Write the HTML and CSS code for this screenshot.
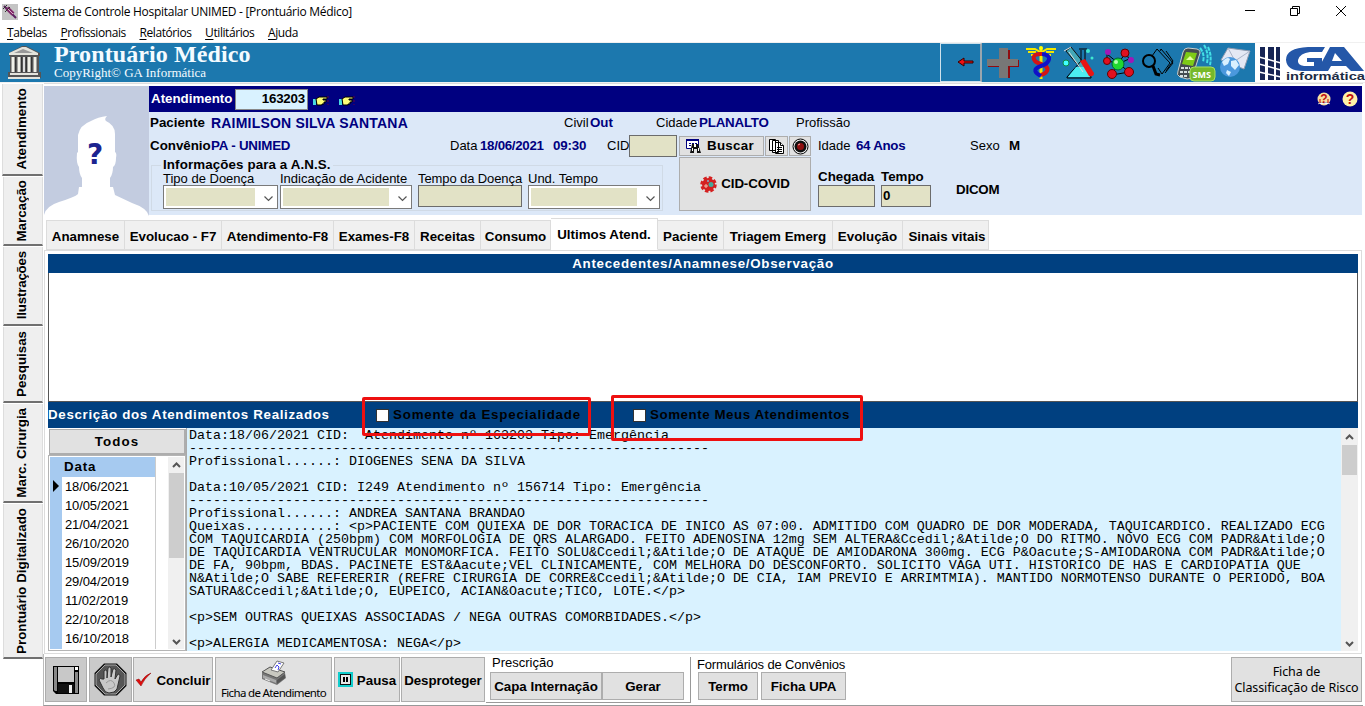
FILE: index.html
```html
<!DOCTYPE html>
<html lang="pt-BR">
<head>
<meta charset="utf-8">
<title>Prontuário Médico</title>
<link rel="stylesheet" href="styles.css">
</head>
<body>
<div class="window">
  <header class="titlebar">
    <svg class="app-icon" width="16" height="16" viewBox="0 0 16 16"><rect width="16" height="16" fill="#c4c4c4"/><path d="M2 2l12 12" stroke="#5c2060" stroke-width="2"/><path d="M5 4l6 6" stroke="#802868" stroke-width="4"/><path d="M1 5l4-4M3 8l5-5" stroke="#333"/><path d="M6 5l5 5" stroke="#d8a8c8"/></svg>
    <span class="window-title">Sistema de Controle Hospitalar UNIMED - [Prontuário Médico]</span>
    <svg class="window-controls" width="120" height="22" viewBox="0 0 120 22" fill="none" stroke="#000"><path d="M5 9.500h10M50.500 7.500h7v7h-7zM52.500 7V5.500h7v7H58M96 5l10 10M106 5l-10 10"/></svg>
  </header>
  <nav class="menubar"><span><u>T</u>abelas</span><span><u>P</u>rofissionais</span><span><u>R</u>elatórios</span><span><u>U</u>tilitários</span><span><u>A</u>juda</span></nav>

  <section class="banner">
    <svg class="bank" width="34" height="36" viewBox="0 0 34 36"><path d="M2 11v-3L15 1h4l14 7v3H32v16h2v6H1v-6h2V11z" fill="#555"/><path d="M2 8L15 2h4l12 6v2H2zM3 28h28v2H3zM1 32h32v2H1z" fill="#e4e4dc"/><path d="M7 8l9-4 10 4z" fill="#999"/><path d="M6 12v15M12 12v15M22 12v15M28 12v15" stroke="#f0f0e8" stroke-width="3"/><path d="M17 12v15" stroke="#ddd" stroke-width="2"/><path d="M8.500 12v15M14.500 12v15M19.500 12v15M24.500 12v15" stroke="#333"/></svg>
    <div class="brand"><h1>Prontuário Médico</h1><p>CopyRight© GA Informática</p></div>
    <div class="back"><svg width="17" height="10" viewBox="0 0 17 10"><path d="M1 5l6-4v3h9v2H7v3z" fill="#f01010" stroke="#300"/></svg></div>
    <svg class="tools" width="273" height="39" viewBox="0 0 273 39">
      <path d="M19 7h9v10h9v7h-9v11H19V24H6v-6h13z" fill="#900c10"/><path d="M17 5h9v11h10v7H26v12H17V23H5v-7h12z" fill="#777"/>
      <g fill="none"><path d="M44 6h9l5 3M46 9h8M49 12h8M74 6h-9l-5 3M72 9h-8M69 12h-8" stroke="#f4e800" stroke-width="2"/><path d="M59 5v31" stroke="#f4e800" stroke-width="3"/><path d="M60 11c-11-1-11 7-1 10s7 9 0 11" stroke="#d41414" stroke-width="4"/><path d="M60 11c11 1 8 9-1 12s-6 7 0 10" stroke="#1010c8" stroke-width="4"/><circle cx="59" cy="5" r="2" fill="#ff0"/></g>
      <path d="M84 8l5-4 20 25q1 4-4 4z" fill="#44a8b8" stroke="#101010"/><path d="M97 6h8M99 7v11L85 34v1h24v-1L103 18V7" fill="none" stroke="#000"/><path d="M94 24h10l4 10H86z" fill="#4cecf0"/><path d="M98 18l5-2 9 14q0 4-5 3z" fill="#e81414"/><path d="M82 8l7-4M87 9l14 20" stroke="#ddd"/><circle cx="84" cy="20" r="3" fill="#40ffff" stroke="#184"/><circle cx="106" cy="8" r="2" fill="#40ead0"/><circle cx="110" cy="15" r="1.500" fill="#40ead0"/>
      <path d="M125 11v7l11 2 8-10 3 6-11 5-6 11 17-3z" stroke="#000" fill="none"/><circle cx="136" cy="21" r="6" fill="#20d830" stroke="#063"/><g fill="#e01020" stroke="#600"><circle cx="125" cy="18" r="3.500"/><circle cx="143" cy="10" r="4"/><circle cx="130" cy="31" r="4.500"/><circle cx="147" cy="29" r="4.500"/></g><g fill="#a018b8"><circle cx="126" cy="9" r="3"/><circle cx="149" cy="17" r="3"/></g><circle cx="134" cy="19" r="2" fill="#b0ffb0"/>
      <g fill="none" stroke="#000"><path d="M170 13l5-7 13 14-8 11M178 8l1-2 12 14-8 10M184 8l7 10-7 10M176 25l4 6"/><circle cx="167" cy="18" r="6" stroke-width="2"/><path d="M171 23l3 8 4 1" stroke-width="3"/></g>
      <path d="M201 9q1-4 5-4l9 1q4 1 3 4l-7 22q-2 5-6 4l-7-2q-4-2-2-6z" fill="#454c50" stroke="#c8d0d0"/><path d="M204 9l11 1-4 13-11-2z" fill="#7ecb16"/><path d="M204 17l4-4 4 4z" fill="#e4ffa0"/><path d="M199 25h9M198 29h10M198 33h8" stroke="#d8e0e0" stroke-width="2" stroke-dasharray="3 1"/><rect x="208" y="24" width="25" height="14" rx="4" fill="#77b82a" stroke="#a9e05e"/><text x="210.500" y="34.500" class="sms">SMS</text><path d="M218 5q5 6 3 14M222 2q5 8 3 18M226 4q4 8 2 18" fill="none" stroke="#42e0e6" stroke-width="2" stroke-dasharray="4 1"/>
      <path d="M246 5l22 3-6 18-23-9z" fill="#e4e8f4" stroke="#8f9bb0"/><path d="M246 5l7 13 15-10" fill="none" stroke="#aab4c8"/><circle cx="248" cy="24" r="10" fill="#4b98dd"/><path d="M240 19q5-6 8-3l-2 5-4 2zM249 18l5-1 3 5-4 5-4-4zM245 27l4 2-2 4-3-3z" fill="#d9f0ff"/>
    </svg>
    <svg class="logo" width="110" height="39" viewBox="0 0 110 39"><g fill="#162454"><path d="M5 4h5v33H5zM13 4h6v33h-6zM21 4h4v33h-4z"/></g><path d="M4 14l22 6M4 21l22 6M4 29l22 5" stroke="#fff" stroke-width="1.500"/><path d="M70 4H53Q31 5 31 17q1 11 17 11h19V15H52v4h7v4H49q-7-1-6-6 2-7 12-8h12z" fill="#2457a8"/><path fill-rule="evenodd" d="M75 4h14l20 24H96l-5-5H76l-3 5H62zM77 18h10l-7-8z" fill="#2457a8"/><text x="31" y="37" class="logo-text" textLength="79" lengthAdjust="spacingAndGlyphs">informática</text></svg>
  </section>

  <div class="workspace">
    <aside class="side-tabs">
      <div class="side-tab t1"><span>Atendimento</span></div><div class="side-tab t2"><span>Marcação</span></div><div class="side-tab t3"><span>Ilustrações</span></div><div class="side-tab t4"><span>Pesquisas</span></div><div class="side-tab t5"><span>Marc. Cirurgia</span></div><div class="side-tab t6"><span>Prontuário Digitalizado</span></div>
    </aside>
    <main class="main">
      <section class="patient">
        <svg class="avatar" width="105" height="132" viewBox="0 0 105 132"><rect width="105" height="132" fill="#c3cce0"/><path d="M0 132v-3q2-9 15-13 16-5 19-8l1-7h3V92q-3-4-3-11-3-4-2-14l1-1V49q2-10 13-14 7-4 16-5-3 3-1 5 9 4 9 13v18q2 1 1 6 0 7-3 9 0 7-3 11v9h3l2 8 17 8q15 5 17 13v2z" fill="#fff"/><text x="51" y="78" text-anchor="middle" class="question">?</text></svg>
        <div class="patient-info">
          <div class="attendance"><b class="att-label">Atendimento</b><span class="att-number">163203</span>
            <svg class="hand" width="18" height="12" viewBox="0 0 18 12"><path d="M0 4h3v6H0z" fill="#48d8e0"/><path d="M3 4l3-2h8v2h-4v1h3v2h-2v2H9v1H4z" fill="#ffff78" stroke="#000"/><path d="M15 1v9" stroke="#600040" stroke-dasharray="2 2"/></svg>
            <svg class="hand" width="18" height="12" viewBox="0 0 18 12"><path d="M0 4h3v6H0z" fill="#48d8e0"/><path d="M3 4l3-2h8v2h-4v1h3v2h-2v2H9v1H4z" fill="#ffff78" stroke="#000"/><path d="M15 1v9" stroke="#600040" stroke-dasharray="2 2"/></svg>
            <svg class="helps" width="42" height="18" viewBox="0 0 42 18"><circle cx="8" cy="9" r="6.500" fill="#f8e0a0"/><path d="M2 14q3-3 6-1 3-2 6 1" fill="#fff" stroke="#aaa"/><text x="8" y="13" text-anchor="middle" class="help-mark">?</text><path d="M4 9v4M12 9v4" stroke="#c00"/><circle cx="34" cy="9" r="7.500" fill="#fff0a8"/><text x="34" y="14" text-anchor="middle" class="help-mark big">?</text></svg>
          </div>
          <div class="line line-a"><b class="w-pac">Paciente</b><b class="value name">RAIMILSON SILVA SANTANA</b><span class="w-civil">Civil</span><b class="value w-out">Out</b><span class="w-cidade">Cidade</span><b class="value w-plan">PLANALTO</b><span>Profissão</span></div>
          <div class="patient-grid">
            <div class="pg-left">
              <div class="line line-b"><b class="w-conv">Convênio</b><b class="value w-unimed">PA - UNIMED</b><span class="w-data">Data</span><b class="value w-date">18/06/2021</b><b class="value w-hour">09:30</b><span class="w-cid">CID</span><i class="field cid-field"></i></div>
              <div class="ans"><b class="ans-title">Informações para a A.N.S.</b>
                <div class="ans-fields">
                  <label><span>Tipo de Doença</span><i class="select s115"><svg width="11" height="7" viewBox="0 0 11 7"><path d="M1.500 1.500l4 4 4-4"/></svg></i></label>
                  <label><span>Indicação de Acidente</span><i class="select s132"><svg width="11" height="7" viewBox="0 0 11 7"><path d="M1.500 1.500l4 4 4-4"/></svg></i></label>
                  <label><span class="ls-tempo">Tempo da Doença</span><i class="field s104"></i></label>
                  <label><span>Und. Tempo</span><i class="select s132"><svg width="11" height="7" viewBox="0 0 11 7"><path d="M1.500 1.500l4 4 4-4"/></svg></i></label>
                </div>
              </div>
            </div>
            <div class="pg-mid">
              <div class="mid-row">
                <div class="btn buscar"><svg width="16" height="16" viewBox="0 0 16 16"><path d="M.500 1.500h12v9H.500z" fill="#fff" stroke="#000080"/><path d="M0 2h13" stroke="#000080" stroke-width="2"/><path d="M3 5.500h8M3 7.500h3" stroke="#000080" stroke-dasharray="2 1"/><path d="M6 6h2v3h2V6h2l3 9h-4v-4H8v4H4z" fill="#111"/><path d="M6.500 10v3M12.500 10v3" stroke="#fff"/></svg><b>Buscar</b></div>
                <div class="btn docs"><svg width="17" height="17" viewBox="0 0 17 17" fill="#fff" stroke="#000"><path d="M1.500 1.500h6v11h-6zM4.500 2.500h6v12h-6zM7.500 4.500h5l3 3v8h-8z"/><path d="M12.500 4.500v3h3M9 9.500h5M9 11.500h5M9 13.500h5"/></svg></div>
                <div class="btn rec"><svg width="17" height="17" viewBox="0 0 17 17"><circle cx="8.500" cy="8.500" r="7.500" fill="#f4f4f4" stroke="#000"/><circle cx="8.500" cy="8.500" r="6" fill="#111"/><circle cx="8.500" cy="8.500" r="3.500" fill="#8e1010"/><path d="M6 7l2-1" stroke="#faa"/></svg></div>
              </div>
              <div class="btn covid"><svg width="17" height="17" viewBox="0 0 17 17"><circle cx="8.500" cy="8.500" r="6.500" fill="#d42020"/><circle cx="8.500" cy="8.500" r="7" fill="none" stroke="#d42020" stroke-width="2.500" stroke-dasharray="3.500 2"/><circle cx="11" cy="8.500" r="2.500" fill="#45a89a"/><path d="M4 10h4M6 8v4" stroke="#f0c0b0"/><circle cx="8" cy="5" r="1" fill="#8ac"/></svg><b>CID-COVID</b></div>
            </div>
            <div class="pg-right">
              <div class="line line-c"><span class="w-idade">Idade</span><b class="value w-anos">64 Anos</b><span class="w-sexo">Sexo</span><b>M</b></div>
              <div class="times"><label><b>Chegada</b><i class="field f57"></i></label><label><b>Tempo</b><i class="field f50"><b>0</b></i></label><b class="dicom">DICOM</b></div>
            </div>
          </div>
        </div>
      </section>

      <nav class="tabs"><b class="k1">Anamnese</b><b class="k2">Evolucao - F7</b><b class="k3">Atendimento-F8</b><b class="k4">Exames-F8</b><b class="k5">Receitas</b><b class="k6">Consumo</b><b class="k7 active">Ultimos Atend.</b><b class="k8">Paciente</b><b class="k9">Triagem Emerg</b><b class="k10">Evolução</b><b class="k11">Sinais vitais</b></nav>

      <section class="sheet">
        <h2 class="bar bar-top">Antecedentes/Anamnese/Observação</h2>
        <div class="notes"></div>
        <div class="bar bar-mid"><span class="bar-title">Descrição dos Atendimentos Realizados</span>
          <span class="check c1"><i></i>Somente da Especialidade</span><span class="check c2"><i></i>Somente Meus Atendimentos</span>
          <div class="mark m1"></div><div class="mark m2"></div>
        </div>
        <div class="records">
          <div class="dates">
            <div class="btn todos">Todos</div>
            <div class="grid">
              <div class="gutter"><svg width="6" height="12" viewBox="0 0 6 12"><path d="M0 0l6 6-6 6z"/></svg></div>
              <div class="col"><b>Data</b><span>18/06/2021</span><span>10/05/2021</span><span>21/04/2021</span><span>26/10/2020</span><span>15/09/2019</span><span>29/04/2019</span><span>11/02/2019</span><span>22/10/2018</span><span>16/10/2018</span></div>
              <div class="scroll grid-scroll"><svg width="9" height="6" viewBox="0 0 9 6"><path d="M1 5l3.500-3.500L8 5"/></svg><i></i><svg class="down" width="9" height="6" viewBox="0 0 9 6"><path d="M1 1l3.500 3.500L8 1"/></svg></div>
            </div>
          </div>
<pre class="log">Data:18/06/2021 CID:  Atendimento nº 163203 Tipo: Emergência
-----------------------------------------------------------------
Profissional......: DIOGENES SENA DA SILVA

Data:10/05/2021 CID: I249 Atendimento nº 156714 Tipo: Emergência
-----------------------------------------------------------------
Profissional......: ANDREA SANTANA BRANDAO
Queixas...........: &lt;p&gt;PACIENTE COM QUIEXA DE DOR TORACICA DE INICO AS 07:00. ADMITIDO COM QUADRO DE DOR MODERADA, TAQUICARDICO. REALIZADO ECG
COM TAQUICARDIA (250bpm) COM MORFOLOGIA DE QRS ALARGADO. FEITO ADENOSINA 12mg SEM ALTERA&amp;Ccedil;&amp;Atilde;O DO RITMO. NOVO ECG COM PADR&amp;Atilde;O
DE TAQUICARDIA VENTRUCULAR MONOMORFICA. FEITO SOLU&amp;Ccedil;&amp;Atilde;O DE ATAQUE DE AMIODARONA 300mg. ECG P&amp;Oacute;S-AMIODARONA COM PADR&amp;Atilde;O
DE FA, 90bpm, BDAS. PACINETE EST&amp;Aacute;VEL CLINICAMENTE, COM MELHORA DO DESCONFORTO. SOLICITO VAGA UTI. HISTORICO DE HAS E CARDIOPATIA QUE
N&amp;Atilde;O SABE REFERERIR (REFRE CIRURGIA DE CORRE&amp;Ccedil;&amp;Atilde;O DE CIA, IAM PREVIO E ARRIMTMIA). MANTIDO NORMOTENSO DURANTE O PERIODO, BOA
SATURA&amp;Ccedil;&amp;Atilde;O, EUPEICO, ACIAN&amp;Oacute;TICO, LOTE.&lt;/p&gt;

&lt;p&gt;SEM OUTRAS QUEIXAS ASSOCIADAS / NEGA OUTRAS COMORBIDADES.&lt;/p&gt;

&lt;p&gt;ALERGIA MEDICAMENTOSA: NEGA&lt;/p&gt;</pre>
          <div class="scroll log-scroll"><svg width="9" height="6" viewBox="0 0 9 6"><path d="M1 5l3.500-3.500L8 5"/></svg><i></i><svg class="down" width="9" height="6" viewBox="0 0 9 6"><path d="M1 1l3.500 3.500L8 1"/></svg></div>
        </div>
      </section>

      <footer class="footer">
        <div class="btn dark save"><svg width="26" height="28" viewBox="0 0 26 28"><path d="M0 0h26v28H3l-3-3z" fill="#000"/><path d="M1 1h3v24H2l-1-1zM22 6h3v21h-3z" fill="#888"/><path d="M5 1h16v15H5z" fill="#c8c8c8"/><path d="M22 1h3v3h-3z" fill="#fff"/><path d="M5 18h16v9H5z" fill="#111"/><path d="M16 19h3v8h-3z" fill="#eee"/></svg></div>
        <div class="btn dark stop"><svg width="33" height="33" viewBox="0 0 33 33"><path d="M10 .500h13l9.500 9.500v13L23 32.500H10L.500 23V10z" fill="#151515"/><path d="M11 2h11l9 9v11l-9 9H11l-9-9V11z" fill="#555" stroke="#aaa"/><path d="M10 16V8q1-2 3 0v7l1-10q2-2 3 0v9l2-8q2-1 3 1l-1 9 3-5q2 0 2 2l-3 13q-2 4-8 4-4 0-6-5l-4-8q1-3 3-1z" fill="#c8c8c8" stroke="#333"/><path d="M12 20q5-5 8 0t-6 6" fill="none" stroke="#999"/></svg></div>
        <div class="btn concluir"><svg width="17" height="15" viewBox="0 0 17 15"><path d="M1 8l3-1 2 3q4-7 10-9Q9 7 6 14z" fill="#e00c0c" stroke="#800" stroke-width=".5"/></svg><b>Concluir</b></div>
        <div class="btn ficha"><svg width="28" height="26" viewBox="0 0 28 26"><path d="M2 13l7-5 16 5 1 5-9 7L2 19z" fill="#777"/><path d="M2 12l8-5 15 5-8 6z" fill="#c8c8c0" stroke="#555"/><path d="M3 15l13 5v3L3 18z" fill="#aaa"/><path d="M17 20l8-6v4l-8 6z" fill="#555"/><path d="M11 10l6-9 7 2-6 9z" fill="#fff" stroke="#777"/><path d="M15 8l2-3 2 2-1 3M18 3l3 1" stroke="#4040e8" fill="none"/><path d="M5 19l5 2" stroke="#eee"/></svg><span>Ficha de Atendimento</span></div>
        <div class="btn pausa"><svg width="15" height="15" viewBox="0 0 15 15"><rect x="1" y="1" width="13" height="13" fill="#e8e8e8" stroke="#1cc" stroke-width="2"/><rect x="2.500" y="2.500" width="10" height="10" fill="none" stroke="#111"/><path d="M6 5v5M9 5v5" stroke="#000" stroke-width="2"/></svg><b>Pausa</b></div>
        <div class="btn desp"><b>Desproteger</b></div>
        <div class="presc"><span>Prescrição</span><div><div class="btn capa"><b>Capa Internação</b></div><div class="btn gerar"><b>Gerar</b></div></div></div>
        <div class="forms"><span>Formulários de Convênios</span><div><div class="btn termo"><b>Termo</b></div><div class="btn upa"><b>Ficha UPA</b></div></div></div>
        <div class="btn risco"><span>Ficha de</span><span>Classificação de Risco</span></div>
      </footer>
    </main>
  </div>
</div>
</body>
</html>
```
FILE: styles.css
```css
* { box-sizing: border-box; }
body { margin: 0; background: #fff; color: #000; font: 13px/16px "Liberation Sans", Arial, sans-serif; }
i { font-style: normal; display: block; }
svg { display: block; flex: none; }
h1, h2, p, pre { margin: 0; }
b { font-size: 13.33px; font-weight: bold; }
.window { width: 1365px; height: 706px; overflow: hidden; display: flex; flex-direction: column; white-space: nowrap; }

.titlebar { height: 24px; display: flex; align-items: center; padding-left: 2px; font: 12px/16px "Open Sans", sans-serif; }
.window-title { margin-left: 5px; letter-spacing: -0.29px; }
.window-controls { margin-left: auto; margin-right: 5px; }
.menubar { height: 18px; padding: 0 7px; display: flex; gap: 13.6px; font: 12px/17px "Open Sans", sans-serif; letter-spacing: -0.42px; }
.menubar u { text-underline-offset: 2px; }

.banner { height: 41px; border-top: 1px solid #f0f0f0; border-bottom: 1px solid #f0f0f0; display: flex; background: #fff; }
.bank { box-sizing: content-box; padding: 2px 12px 1px 7px; background: #1c78ae; height: 36px; width: 34px; }
.brand { width: 887px; padding-left: 1px; background: #1c78ae; color: #f4fbff; font-family: "Liberation Serif", "Times New Roman", serif; }
.brand h1 { font-size: 24px; line-height: 22px; letter-spacing: 0.1px; }
.brand p { font-size: 13px; line-height: 16px; }
.back { width: 42px; padding: 13px 0 0 16px; background: #1c78ae; border: 1px solid #cfe2ec; border-right: 2px solid #9aa6ae; }
.tools { background: #1c78ae; }
.sms { font: bold 9px "Open Sans", sans-serif; fill: #fff; }
.logo-text { font: bold 11px "Liberation Sans", sans-serif; fill: #1c2c44; }

.workspace { flex: 1; display: flex; min-height: 0; }
.side-tabs { width: 44px; padding: 1px 0 0 2px; }
.side-tab { width: 40px; margin-left: 1px; margin-bottom: 1px; background: #efefef; border-left: 1px solid #ddd; border-bottom: 2px solid #707070; border-right: 1px solid #ddd; display: flex; align-items: center; justify-content: center; }
.side-tab span { writing-mode: vertical-rl; transform: rotate(180deg); font-size: 13.33px; font-weight: bold; line-height: 16px; margin-right: 2px; }
.t1 { height: 92px; width: 41px; margin-left: 0; }
.t2 { height: 69px; }
.t3 { height: 79px; }
.t3 span { letter-spacing: -0.2px; }
.t4 { height: 76px; }
.t5 { height: 99px; }
.t6 { height: 155px; }

.main { width: 1319px; display: flex; flex-direction: column; border-top: 1px solid #ddd; padding-top: 2px; }
.patient { display: flex; height: 132px; }
.question { font: bold 28px "DejaVu Sans", sans-serif; fill: #1c2490; }
.patient-info { width: 1213px; height: 129px; background: #dce8f8; }
.attendance { height: 26px; background: #000080; display: flex; align-items: center; color: #fff; }
.att-label { width: 86px; padding-left: 2px; }
.att-number { width: 73px; height: 21px; background: #d9f2ff; border: 1px solid #888; color: #000; font: bold 13.33px/18px "Liberation Sans", sans-serif; letter-spacing: -0.2px; text-align: right; padding-right: 2px; }
.hand { margin: 4px 0 0 5px; }
.hand + .hand { margin-left: 8px; }
.helps { margin-left: auto; margin-right: 4px; }
.help-mark { font: bold 12px "Liberation Sans", sans-serif; fill: #c01010; }
.help-mark.big { font-size: 14px; }
.line { display: flex; align-items: center; height: 22px; }
.value { color: #000080; }
.line-a { padding-left: 1px; }
.w-pac { width: 61px; }
.name { width: 353px; font-size: 14px; letter-spacing: 0.2px; }
.w-civil { width: 26px; }
.w-out { width: 66px; }
.w-cidade { width: 43px; }
.w-plan { width: 97px; letter-spacing: -0.2px; }
.patient-grid { display: grid; grid-template-columns: 530px 139px 1fr; height: 81px; }
.line-b, .line-c { height: 23px; }
.line-b { padding-left: 1px; }
.w-conv { width: 61px; }
.w-unimed { width: 239px; letter-spacing: -0.2px; }
.w-data { width: 30px; }
.w-date { width: 73px; letter-spacing: -0.3px; }
.w-hour { width: 54px; letter-spacing: -0.2px; }
.w-cid { width: 22px; }
.field { background: #e2e2c6; border: 1px solid #6c6c6c; height: 22px; }
.cid-field { width: 48px; margin-top: 1px; }
.ans { position: relative; margin: 8px 0 0 2px; width: 512px; height: 46px; border: 1px solid #d0dae6; }
.ans-title { position: absolute; left: 9px; top: -8px; background: #dce8f8; padding: 0 2px; line-height: 14px; letter-spacing: 0.12px; }
.ans-fields { display: flex; padding: 5px 0 0 11px; position: relative; }
.ans-fields label { display: block; line-height: 15px; }
.ans-fields label:nth-child(2) { margin-left: 2px; }
.ans-fields label:nth-child(3), .ans-fields label:nth-child(4) { margin-left: 6px; }
.ans-fields label > span { display: block; width: 0; height: 14px; }
.ls-tempo { letter-spacing: -0.1px; }
.select { height: 24px; background: #fff; border: 1px solid #7a7a7a; padding: 2px; display: flex; align-items: center; justify-content: flex-end; }
.select::before { content: ""; flex: 1; align-self: stretch; background: #e2e2c6; }
.select svg { margin: 2px 1px 0 8px; fill: none; stroke: #555; stroke-width: 1.2; }
.s115 { width: 115px; } .s132 { width: 132px; } .s104 { width: 104px; }
.btn { background: #e1e1e1; border: 1px solid #adadad; display: flex; align-items: center; justify-content: center; }
.pg-mid { padding-top: 2px; width: 132px; }
.mid-row { display: flex; gap: 1px; height: 20px; margin-bottom: 1px; }
.buscar { width: 85px; gap: 5px; padding-right: 3px; }
.buscar b { letter-spacing: 0.3px; }
.docs { width: 23px; } .rec { width: 22px; }
.covid { height: 54px; gap: 4px; }
.covid b { letter-spacing: -0.15px; }
.w-idade { width: 38px; } .w-anos { width: 114px; letter-spacing: -0.3px; } .w-sexo { width: 39px; }
.times { display: flex; padding-top: 11px; }
.times label { display: block; width: 63px; }
.times label > b { display: block; line-height: 18px; height: 17px; }
.f57 { width: 57px; } .f50 { width: 50px; padding: 2px 1px; }
.dicom { margin: 14px 0 0 12px; letter-spacing: -0.2px; }

.tabs { display: flex; align-items: flex-end; height: 32px; padding-left: 2px; }
.tabs b { height: 30px; background: #f0f0f0; border: 1px solid #dcdcdc; border-left: 0; text-align: center; line-height: 32px; }
.tabs .k1 { width: 79px; border-left: 1px solid #dcdcdc; }
.k2 { width: 97px; } .k3 { width: 112px; } .k4 { width: 81px; } .k5 { width: 66px; } .k6 { width: 70px; }
.tabs .k7 { width: 107px; height: 32px; background: #fff; border-bottom-color: #fff; }
.k8 { width: 66px; } .k9 { width: 109px; } .k10 { width: 70px; } .tabs .k11 { width: 86px; padding-left: 3px; }

.sheet { border: 1px solid #dcdcdc; height: 404px; padding: 3px 3px 0; width: 1318px; }
.bar { background: #004080; color: #fff; font-size: 13.33px; font-weight: bold; }
.bar-top { height: 19px; line-height: 19px; text-align: center; letter-spacing: 0.72px; }
.notes { height: 129px; border: 1px solid #555; border-top: 0; }
.bar-mid { height: 26px; line-height: 26px; display: flex; position: relative; letter-spacing: 0.68px; }
.bar-title { width: 328px; }
.check { display: flex; align-items: center; color: #000; gap: 4px; }
.check i { width: 13px; height: 13px; background: #fff; border: 1px solid #333; }
.c1 { width: 257px; letter-spacing: 0.83px; }
.c2 { letter-spacing: 0.55px; }
.mark { position: absolute; z-index: 2; border: 3px solid #ee1010; border-radius: 2px; }
.m1 { left: 314px; top: -5px; width: 229px; height: 39px; }
.m2 { left: 563px; top: -7px; width: 252px; height: 46px; }
.records { display: flex; height: 223px; background: #d9f2ff; }
.dates { width: 139px; background: #fff; border-right: 1px solid #aaa; }
.todos { height: 26px; margin: 1px 0 0 1px; font-size: 13.33px; font-weight: bold; letter-spacing: 1.1px; border-width: 1px 2px 2px 1px; }
.grid { height: 196px; display: flex; border: 1px solid #b4b4b4; padding: 1px; }
.gutter { width: 12px; background: #a6caf0; padding: 23px 0 0 3px; }
.col { width: 95px; height: 192px; border-right: 1px solid #ccc; }
.col b { display: block; height: 20px; background: #a6caf0; padding-left: 2px; line-height: 20px; letter-spacing: 0.9px; }
.col span { display: block; height: 19px; line-height: 19px; padding-left: 3px; letter-spacing: -0.1px; }
.scroll { background: #f0f0f0; display: flex; flex-direction: column; align-items: center; padding: 7px 0; }
.scroll svg { fill: none; stroke: #555; stroke-width: 2; }
.scroll i { background: #cdcdcd; }
.scroll .down { margin-top: auto; }
.grid-scroll { width: 16px; margin-left: 12px; padding: 5px 0 4px; }
.grid-scroll i { width: 15px; height: 85px; margin-top: 5px; }
.log { flex: 1; padding: 1px 0 0 2px; font: 13.33px/13px "Liberation Mono", "Courier New", monospace; color: #000; overflow: hidden; }
.log-scroll { width: 17px; padding: 6px 0 4px; }
.log-scroll i { width: 15px; height: 30px; margin-top: 5px; }

.footer { display: flex; margin-left: -1px; height: 52px; padding: 3px 1px 0 1px; border-bottom: 1px solid #999; border-left: 1px solid #bbb; width: 1320px; }
.footer > .btn { height: 45px; }
.footer b { position: relative; top: 1px; }
.dark { background: #cacaca; }
.save { width: 42px; } .stop { width: 43px; margin-left: 2px; }
.concluir { width: 80px; margin-left: 1px; gap: 4px; }
.ficha { width: 117px; margin-left: 2px; flex-direction: column; }
.ficha span, .risco span { font: 12px/13px "Noto Sans", sans-serif; letter-spacing: -0.9px; }
.ficha span { font-size: 11.5px; letter-spacing: -0.65px; }
.pausa { width: 66px; margin-left: 2px; gap: 4px; }
.desp { width: 84px; margin-left: 1px; }
.desp b { letter-spacing: -0.1px; }
.presc { width: 205px; height: 46px; margin-left: 1px; padding-left: 4px; border-right: 1px solid #999; border-bottom: 1px solid #999; }
.presc > span, .forms > span { display: block; padding-left: 2px; height: 15px; line-height: 12px; letter-spacing: -0.15px; }
.presc > span { letter-spacing: 0; }
.presc > div, .forms > div { display: flex; }
.presc .btn, .forms .btn { height: 28px; }
.capa { width: 112px; } .gerar { width: 82px; }
.forms { margin-left: 7px; }
.forms > span { padding-left: 0; line-height: 15px; margin-left: -1px; }
.termo { width: 60px; margin-right: 3px; } .upa { width: 85px; }
.footer .risco { width: 131px; margin-left: auto; flex-direction: column; }
.risco .btn, .risco span { font-size: 12.5px; line-height: 16px; letter-spacing: -0.1px; }
```
